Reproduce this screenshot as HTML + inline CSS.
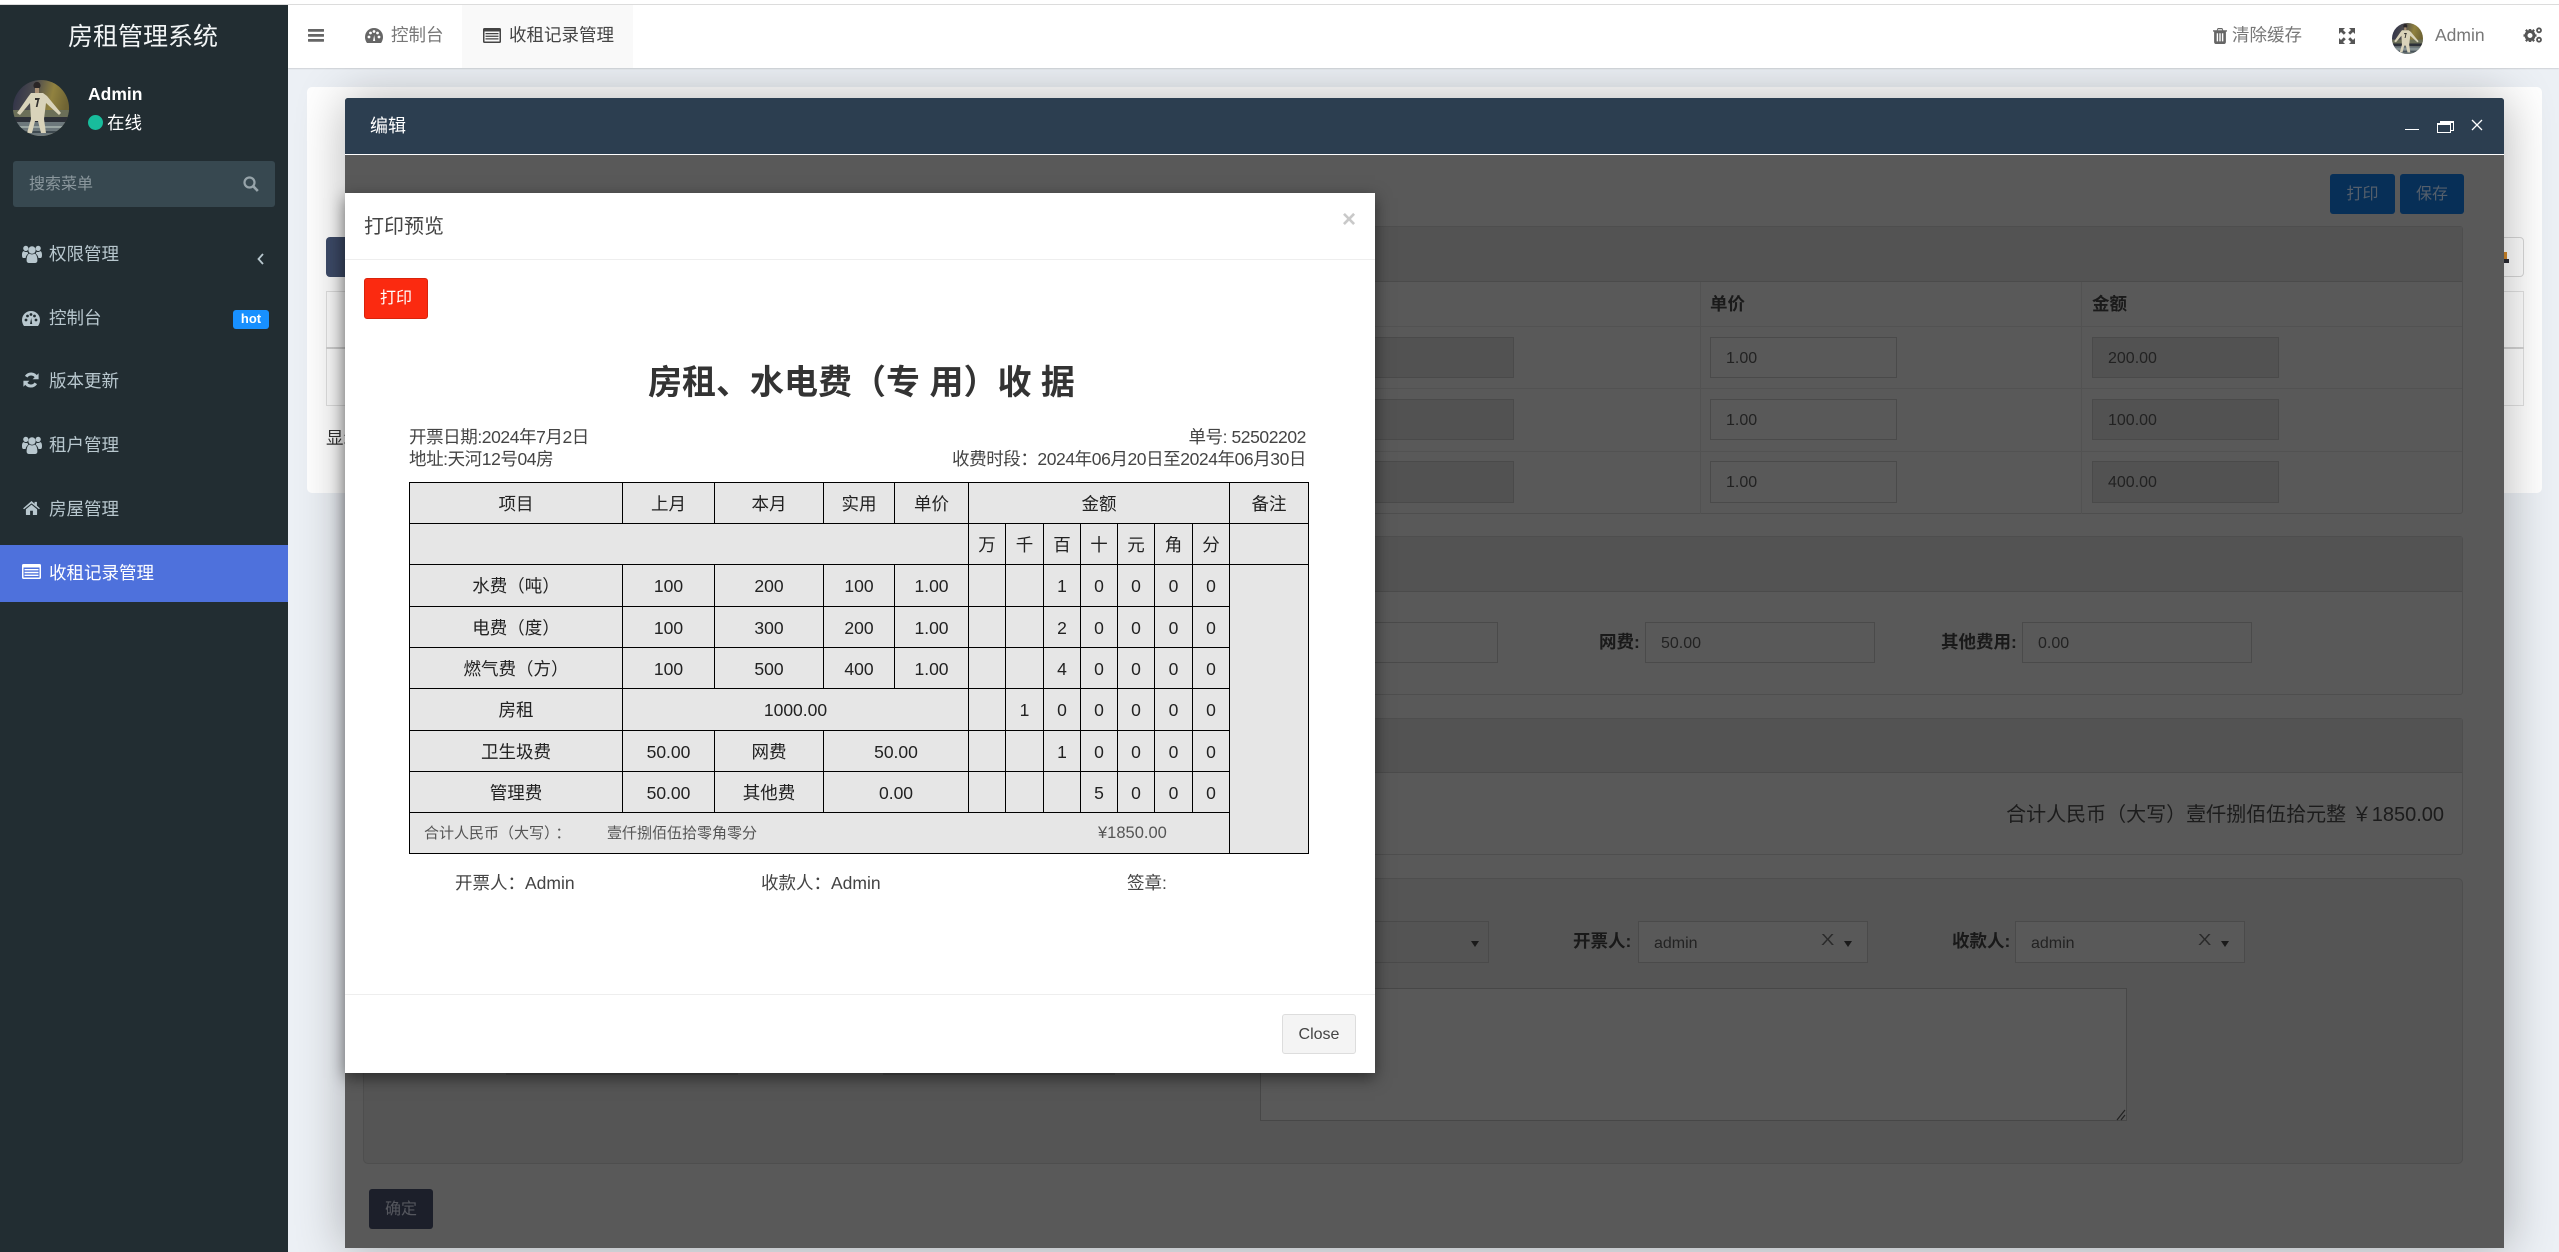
<!DOCTYPE html>
<html lang="zh-CN">
<head>
<meta charset="utf-8">
<title>房租管理系统</title>
<style>
*{box-sizing:border-box}
html,body{margin:0;padding:0;width:2559px;height:1252px;overflow:hidden;background:#ecf0f5;font-family:"Liberation Sans","Noto Sans CJK SC",sans-serif;font-size:17.5px;color:#333}
.a{position:absolute}
.t{position:absolute;white-space:nowrap}
svg{position:absolute;display:block;overflow:visible}
#top{left:0;top:0;width:2559px;height:5px;background:#fff;border-bottom:1px solid #dcdcdc}
#side{left:0;top:5px;width:288px;height:1247px;background:#222d32}
#hdr{left:288px;top:5px;width:2271px;height:63px;background:#fff;box-shadow:0 1px 1px rgba(0,0,0,.12)}
.m{color:#b8c7ce;font-size:17.5px;line-height:30px;left:49px}
.hd{color:#777;line-height:30px;top:20px}
#clip{left:288px;top:68px;width:2271px;height:1184px;overflow:hidden}
#panel{left:19px;top:19px;width:2235px;height:406px;background:#fff;border-radius:5px}
#layer{left:57px;top:30px;width:2159px;height:1150px;background:#595959;border-radius:3px 3px 0 0;box-shadow:1px 1px 50px rgba(0,0,0,.3)}
#lh{left:0;top:0;width:2159px;height:57px;background:#2c3e50;border-bottom:1px solid #fff;border-radius:3px 3px 0 0}
.pn{background:#595959;border:1px solid #4e4e4e;border-radius:3px;left:18px;width:2100px}
.ph{background:#535353;left:0;top:0;width:100%;border-bottom:1px solid #4b4b4b}
.ip{position:absolute;border:1px solid #4a4a4a;background:#595959;color:#222;font-size:16px;line-height:41px;padding-left:15px;white-space:nowrap}
.ro{background:#525252}
.lb{font-weight:bold;color:#191919;line-height:30px;white-space:nowrap;position:absolute}
#modal{left:345px;top:193px;width:1030px;height:880px;background:#fff;box-shadow:0 5px 15px rgba(0,0,0,.5)}
table{border-collapse:collapse;table-layout:fixed;position:absolute;left:64px;top:289px;width:899px;background:#e6e6e6;color:#222}
td{border:1px solid #000;padding:1px 0 0;text-align:center;font-size:17.5px;line-height:20px;position:relative}
.ds{letter-spacing:-.42px}
</style>
</head>
<body>
<svg width="0" height="0" style="position:absolute">
<defs>
<linearGradient id="avg" x1="0" y1="0" x2="1" y2=".25"><stop offset="0" stop-color="#2b2e48"/><stop offset=".4" stop-color="#4d4c4e"/><stop offset=".72" stop-color="#91823f"/><stop offset="1" stop-color="#6f6434"/></linearGradient>
<clipPath id="avc"><circle cx="28" cy="28" r="28"/></clipPath>
<symbol id="avatar" viewBox="0 0 56 56">
<g clip-path="url(#avc)">
<rect width="56" height="56" fill="url(#avg)"/>
<rect y="30" width="56" height="7" fill="#6b6f58"/>
<rect y="37" width="56" height="5" fill="#2c3038"/>
<rect y="42" width="56" height="14" fill="#6d787c"/>
<rect y="46" width="56" height="2" fill="#9aa6a3"/>
<rect y="51" width="56" height="2" fill="#3f4a50"/>
<circle cx="24" cy="5.500" r="3.600" fill="#2a2526"/>
<path d="M22 8h4v5h-4z" fill="#a98f74"/>
<path d="M18 13h12l4 3 14 17-2 2-13-12-2 16 2 14h-5l-3-12h-3l-3 12h-5l4-14-1-16-10 12-3-2 11-16z" fill="#d9d3ba"/>
<path d="M22 18h5l-1 2-1.500 7h-1.700l1.500-7H22z" fill="#33312f"/>
</g>
</symbol>
<symbol id="users" viewBox="0 0 20 18">
<circle cx="10" cy="5" r="3.7"/><circle cx="3.8" cy="3.4" r="2.6"/><circle cx="16.2" cy="3.4" r="2.6"/>
<path d="M4.600 15.500c0-4.500 1.600-6.800 3-6.900 1.500 1.100 3.300 1.100 4.800 0 1.400.1 3 2.400 3 6.900 0 1.600-1 2.500-2.500 2.500H7.100c-1.500 0-2.500-.9-2.500-2.500z"/>
<path d="M0 10c0-2.400.7-3.800 1.700-3.900 1.100.9 2.600 1.100 4 .6-.2.8.2 1.400.6 1.900-1.400 1-2.400 2.500-2.700 4.400H1.400C.5 13 0 12 0 10z"/>
<path d="M20 10c0-2.400-.7-3.800-1.700-3.900-1.100.9-2.600 1.100-4 .6.2.8-.2 1.400-.6 1.900 1.400 1 2.400 2.500 2.700 4.400h2.200c.9 0 1.400-1 1.400-3z"/>
</symbol>
<symbol id="refresh" viewBox="0 0 16 16">
<path d="M13.300 5.200A5.800 5.800 0 0 0 3.200 4.700" fill="none" stroke="currentColor" stroke-width="3"/>
<path d="M15.600 1.200v6h-6z"/>
<path d="M2.700 10.800a5.800 5.800 0 0 0 10.100.5" fill="none" stroke="currentColor" stroke-width="3"/>
<path d="M.4 14.800v-6h6z"/>
</symbol>
<symbol id="home" viewBox="0 0 18 15">
<path d="M9 0l3.300 2.900V1h2.500v4l3.200 2.900-.9 1L9 2.500 1 8.900l-1-1z"/>
<path d="M9 3.900l6 5v5.400c0 .4-.3.7-.7.7h-3.800v-4.500h-3V15H3.700c-.4 0-.7-.3-.7-.7V8.900z"/>
</symbol>
<symbol id="bars" viewBox="0 0 16 13"><rect width="16" height="2.800" rx=".5"/><rect y="5" width="16" height="2.800" rx=".5"/><rect y="10" width="16" height="2.800" rx=".5"/></symbol>
<symbol id="trash" viewBox="0 0 14 16">
<path d="M4.700 0h4.600l1 2.200H14v1.400h-1.100V14c0 1.100-.7 2-1.700 2H2.800c-1 0-1.700-.9-1.700-2V3.600H0V2.200h3.700zM5.200 1.300l-.4.9h4.400l-.4-.9zM3.700 5.200v8.200h1.400V5.200zm2.600 0v8.200h1.400V5.200zm2.600 0v8.200h1.400V5.200z" fill-rule="evenodd"/>
</symbol>
<symbol id="expand" viewBox="0 0 16 16">
<path d="M0 0h6L4 2l2.800 2.800-2 2L2 4 0 6zM16 0v6l-2-2-2.800 2.800-2-2L12 2l-2-2zM0 16v-6l2 2 2.800-2.800 2 2L4 14l2 2zM16 16h-6l2-2-2.800-2.800 2-2L14 12l2-2z"/>
</symbol>
<symbol id="cogs" viewBox="0 0 20 16">
<circle cx="7" cy="8.500" r="4" fill="none" stroke="currentColor" stroke-width="3"/>
<path d="M5.800 2h2.400l.3 2H5.500zM5.800 15h2.400l.3-2H5.500zM.5 7.300v2.400l2-.3V7.600zM13.500 7.300v2.400l-2-.3V7.600zM2 3.700L3.700 2 5 3.600 3.600 5zM12 3.700L10.300 2 9 3.600 10.400 5zM2 13.300L3.700 15 5 13.400 3.600 12zM12 13.300L10.300 15 9 13.400 10.400 12z"/>
<circle cx="16" cy="3.300" r="2" fill="none" stroke="currentColor" stroke-width="1.800"/>
<circle cx="16" cy="12.700" r="2" fill="none" stroke="currentColor" stroke-width="1.800"/>
</symbol>
</defs>
</svg>

<div id="top" class="a"></div>

<!-- sidebar -->
<div id="side" class="a">
  <div class="t" style="left:68px;top:16px;font-size:25px;line-height:32px;color:#f2f5f6">房租管理系统</div>
  <svg style="left:13px;top:75px" width="56" height="56"><use href="#avatar"/></svg>
  <div class="t" style="left:88px;top:78px;font-size:17.5px;line-height:22px;font-weight:bold;color:#fff">Admin</div>
  <div class="a" style="left:88px;top:110px;width:15px;height:15px;border-radius:50%;background:#18bc9c"></div>
  <div class="t" style="left:107px;top:107px;line-height:22px;color:#fff">在线</div>
  <div class="a" style="left:13px;top:156px;width:262px;height:46px;background:#374850;border-radius:3px"></div>
  <div class="t" style="left:29px;top:168px;font-size:16px;line-height:24px;color:#8b979d">搜索菜单</div>
  <svg style="left:243px;top:171px;color:#97a4aa" width="16" height="16" viewBox="0 0 16 16"><circle cx="6.500" cy="6.500" r="5" fill="none" stroke="currentColor" stroke-width="2.200"/><path d="M10.300 10.300l4.500 4.700" stroke="currentColor" stroke-width="2.600" fill="none"/></svg>

  <svg style="left:22px;top:240px;fill:#b8c7ce" width="20" height="18"><use href="#users"/></svg>
  <div class="t m" style="top:234px">权限管理</div>
  <svg style="left:257px;top:248px" width="7" height="12" viewBox="0 0 7 12"><path d="M6 1L1.500 6 6 11" fill="none" stroke="#b8c7ce" stroke-width="1.800"/></svg>

  <svg style="left:22px;top:306px" width="18" height="15" viewBox="0 0 18 15"><path d="M9 0a9 9 0 0 0-9 9c0 2.400.8 4.400 2 6h14c1.200-1.600 2-3.600 2-6a9 9 0 0 0-9-9z" fill="#b8c7ce"/><circle cx="4" cy="9" r="1.400" fill="#222d32"/><circle cx="5.500" cy="5" r="1.400" fill="#222d32"/><circle cx="9" cy="3.500" r="1.400" fill="#222d32"/><circle cx="14" cy="9" r="1.400" fill="#222d32"/><circle cx="12.500" cy="5" r="1.400" fill="#222d32"/><path d="M8 13l1.200-6 1 6z" fill="#222d32"/></svg>
  <div class="t m" style="top:298px">控制台</div>
  <div class="t" style="left:233px;top:305px;width:36px;height:19px;background:#1890ff;border-radius:3px;color:#fff;font-weight:bold;font-size:13px;line-height:18px;text-align:center">hot</div>

  <svg style="left:23px;top:367px;fill:#b8c7ce;color:#b8c7ce" width="16" height="16"><use href="#refresh"/></svg>
  <div class="t m" style="top:361px">版本更新</div>

  <svg style="left:22px;top:431px;fill:#b8c7ce" width="20" height="18"><use href="#users"/></svg>
  <div class="t m" style="top:425px">租户管理</div>

  <svg style="left:23px;top:496px;fill:#b8c7ce" width="17" height="14"><use href="#home"/></svg>
  <div class="t m" style="top:489px">房屋管理</div>

  <div class="a" style="left:0;top:540px;width:288px;height:57px;background:#4e71dc"></div>
  <svg style="left:22px;top:559px" width="19" height="15" viewBox="0 0 19 15"><rect width="19" height="15" rx="1.500" fill="#fff"/><path d="M1.500 3.500h16V13.500h-16z" fill="#4e71dc"/><path d="M2.500 5h14v1.400h-14zM2.500 7.800h14v1.400h-14zM2.500 10.600h14v1.400h-14z" fill="#fff"/></svg>
  <div class="t m" style="top:553px;color:#fff">收租记录管理</div>
</div>

<!-- header -->
<div id="hdr" class="a">
  <svg style="left:20px;top:24px;fill:#666" width="16" height="13"><use href="#bars"/></svg>
  <svg style="left:77px;top:23px" width="18" height="15" viewBox="0 0 18 15"><path d="M9 0a9 9 0 0 0-9 9c0 2.400.8 4.400 2 6h14c1.200-1.600 2-3.600 2-6a9 9 0 0 0-9-9z" fill="#666"/><circle cx="4" cy="9" r="1.400" fill="#fff"/><circle cx="5.500" cy="5" r="1.400" fill="#fff"/><circle cx="9" cy="3.500" r="1.400" fill="#fff"/><circle cx="14" cy="9" r="1.400" fill="#fff"/><circle cx="12.500" cy="5" r="1.400" fill="#fff"/><path d="M8 13l1.200-6 1 6z" fill="#fff"/></svg>
  <div class="t hd" style="left:103px;top:15px">控制台</div>
  <div class="a" style="left:174px;top:0;width:171px;height:63px;background:#f9f9f9"></div>
  <svg style="left:195px;top:23px" width="18" height="15" viewBox="0 0 18 15"><rect width="18" height="15" rx="1.500" fill="#444"/><path d="M1.500 3.500h15v10h-15z" fill="#f9f9f9"/><path d="M2.500 5h13v1.300h-13zM2.500 7.600h13v1.300h-13zM2.500 10.200h13v1.300h-13z" fill="#444"/></svg>
  <div class="t hd" style="left:221px;top:15px;color:#444">收租记录管理</div>

  <svg style="left:1925px;top:23px;fill:#666" width="14" height="16"><use href="#trash"/></svg>
  <div class="t hd" style="left:1944px;top:15px">清除缓存</div>
  <svg style="left:2051px;top:23px;fill:#555" width="16" height="16"><use href="#expand"/></svg>
  <svg style="left:2104px;top:18px" width="31" height="31"><use href="#avatar"/></svg>
  <div class="t hd" style="left:2147px;top:15px">Admin</div>
  <svg style="left:2235px;top:22px;fill:#555;color:#555" width="20" height="16"><use href="#cogs"/></svg>
</div>

<!-- content area -->
<div id="clip" class="a">
  <div id="panel" class="a">
    <div class="a" style="left:19px;top:150px;width:60px;height:40px;background:#3f4d6b;border-radius:4px"></div>
    <div class="a" style="left:19px;top:204px;width:2198px;height:115px;border:1px solid #e2e2e2;background:#fff"></div>
    <div class="a" style="left:19px;top:260px;width:2198px;height:2px;background:#d4d4d4"></div>
    <div class="t" style="left:19px;top:337px;line-height:28px;color:#333">显示</div>
    <div class="a" style="left:2162px;top:150px;width:55px;height:40px;background:#fff;border:1px solid #d8d8d8;border-radius:4px"></div>
    <div class="a" style="left:2197px;top:165px;width:3px;height:7px;background:#d58a2a"></div>
    <div class="a" style="left:2197px;top:172px;width:5px;height:4px;background:#2b2b33"></div>
  </div>

  <div id="layer" class="a">
    <div id="lh" class="a">
      <div class="t" style="left:25px;top:15px;font-size:18px;line-height:26px;color:#fff">编辑</div>
      <div class="a" style="left:2060px;top:31px;width:14px;height:1px;background:#fff"></div>
      <div class="a" style="left:2095px;top:23px;width:14px;height:10px;border:1px solid #fff;border-top-width:2px"></div>
      <div class="a" style="left:2092px;top:25px;width:14px;height:10px;border:1px solid #fff;border-top-width:2px;background:#2c3e50"></div>
      <svg style="left:2127px;top:22px" width="10" height="10" viewBox="0 0 10 10"><path d="M0 0l10 10M10 0L0 10" stroke="#fff" stroke-width="1.300"/></svg>
    </div>

    <div class="t" style="left:1985px;top:76px;width:65px;height:40px;background:#072f57;border-radius:3px;color:#555f6b;text-align:center;line-height:42px;font-size:16px">打印</div>
    <div class="t" style="left:2055px;top:76px;width:64px;height:40px;background:#072f57;border-radius:3px;color:#555f6b;text-align:center;line-height:42px;font-size:16px">保存</div>

    <!-- panel 1 -->
    <div class="a pn" style="top:128px;height:288px">
      <div class="a ph" style="height:55px"></div>
      <div class="a" style="left:0;top:99px;width:100%;height:1px;background:#525252"></div>
      <div class="a" style="left:0;top:161px;width:100%;height:1px;background:#525252"></div>
      <div class="a" style="left:0;top:224px;width:100%;height:1px;background:#525252"></div>
      <div class="a" style="left:1336px;top:55px;width:1px;height:232px;background:#525252"></div>
      <div class="a" style="left:1717px;top:55px;width:1px;height:232px;background:#525252"></div>
      <div class="lb" style="left:1346px;top:62px;color:#1a1a1a">单价</div>
      <div class="lb" style="left:1728px;top:62px;color:#1a1a1a">金额</div>
      <div class="ip ro" style="left:900px;top:110px;width:250px;height:41px"></div>
      <div class="ip ro" style="left:900px;top:172px;width:250px;height:41px"></div>
      <div class="ip ro" style="left:900px;top:234px;width:250px;height:42px"></div>
      <div class="ip" style="left:1346px;top:110px;width:187px;height:41px">1.00</div>
      <div class="ip" style="left:1346px;top:172px;width:187px;height:41px">1.00</div>
      <div class="ip" style="left:1346px;top:234px;width:187px;height:42px">1.00</div>
      <div class="ip ro" style="left:1728px;top:110px;width:187px;height:41px">200.00</div>
      <div class="ip ro" style="left:1728px;top:172px;width:187px;height:41px">100.00</div>
      <div class="ip ro" style="left:1728px;top:234px;width:187px;height:42px">400.00</div>
    </div>

    <!-- panel 2 -->
    <div class="a pn" style="top:438px;height:159px">
      <div class="a ph" style="height:55px"></div>
      <div class="ip" style="left:900px;top:85px;width:234px;height:41px"></div>
      <div class="lb" style="left:1235px;top:90px">网费:</div>
      <div class="ip" style="left:1281px;top:85px;width:230px;height:41px">50.00</div>
      <div class="lb" style="left:1577px;top:90px">其他费用:</div>
      <div class="ip" style="left:1658px;top:85px;width:230px;height:41px">0.00</div>
    </div>

    <!-- panel 3 -->
    <div class="a pn" style="top:620px;height:137px">
      <div class="a ph" style="height:54px"></div>
      <div class="t" style="right:18px;top:81px;font-size:20px;line-height:30px;color:#1c1c1c">合计人民币（大写）壹仟捌佰伍拾元整 ￥1850.00</div>
    </div>

    <!-- panel 4 -->
    <div class="a pn" style="top:780px;height:286px;background:#555;border-radius:5px">
      <div class="ip" style="left:900px;top:42px;width:225px;height:42px;background:#545454"></div>
      <div class="a" style="left:1107px;top:62px;border:4px solid transparent;border-top:6px solid #1a1a1a;border-bottom:0"></div>

      <div class="lb" style="left:1209px;top:47px">开票人:</div>
      <div class="ip" style="left:1274px;top:42px;width:230px;height:42px;color:#222;line-height:43px">admin</div>
      <div class="t" style="left:1457px;top:51px;line-height:22px;font-size:16px;color:#2a2a2a;transform:scaleX(1.25);transform-origin:left">X</div>
      <div class="a" style="left:1480px;top:62px;border:4px solid transparent;border-top:6px solid #1a1a1a;border-bottom:0"></div>

      <div class="lb" style="left:1588px;top:47px">收款人:</div>
      <div class="ip" style="left:1651px;top:42px;width:230px;height:42px;color:#222;line-height:43px">admin</div>
      <div class="t" style="left:1834px;top:51px;line-height:22px;font-size:16px;color:#2a2a2a;transform:scaleX(1.25);transform-origin:left">X</div>
      <div class="a" style="left:1857px;top:62px;border:4px solid transparent;border-top:6px solid #1a1a1a;border-bottom:0"></div>

      <div class="a" style="left:896px;top:109px;width:867px;height:133px;background:#595959;border:1px solid #474747"></div>
      <svg style="left:1752px;top:231px" width="10" height="10" viewBox="0 0 10 10"><path d="M9 0L1 10M9 5L5 10" stroke="#222" stroke-width="1.200"/></svg>
    </div>

    <div class="a" style="left:161px;top:975px;width:232px;height:2px;background:#4a4a4a"></div>
    <div class="a" style="left:538px;top:975px;width:232px;height:2px;background:#4a4a4a"></div>

    <div class="t" style="left:24px;top:1091px;width:64px;height:40px;background:#1c1f2a;border-radius:3px;color:#55575e;text-align:center;line-height:42px;font-size:16px">确定</div>
  </div>
</div>

<!-- print modal -->
<div id="modal" class="a">
  <div class="t" style="left:19px;top:20px;font-size:20px;line-height:28px;color:#444">打印预览</div>
  <div class="t" style="left:997px;top:14px;font-size:24px;line-height:26px;font-weight:bold;color:#c9c9c9">×</div>
  <div class="a" style="left:0;top:66px;width:1030px;height:1px;background:#eee"></div>
  <div class="t" style="left:19px;top:85px;width:64px;height:41px;background:#fb2a10;border:1px solid #d9230b;border-radius:3px;color:#fff;text-align:center;line-height:40px;font-size:16px">打印</div>
  <div class="t" style="left:303px;top:166px;font-size:34px;line-height:48px;font-weight:bold;color:#333">房租、水电费（专 用）收 据</div>

  <div class="t ds" style="left:64px;top:232px;line-height:24px;color:#444">开票日期:2024年7月2日</div>
  <div class="t ds" style="left:64px;top:254px;line-height:24px;color:#444">地址:天河12号04房</div>
  <div class="t ds" style="right:69px;top:232px;line-height:24px;color:#444">单号: 52502202</div>
  <div class="t ds" style="right:69px;top:254px;line-height:24px;color:#444">收费时段：2024年06月20日至2024年06月30日</div>

  <table>
    <colgroup><col style="width:213px"><col style="width:92px"><col style="width:109px"><col style="width:71px"><col style="width:74px"><col style="width:37px"><col style="width:38px"><col style="width:37px"><col style="width:37px"><col style="width:37px"><col style="width:38px"><col style="width:37px"><col style="width:79px"></colgroup>
    <tr style="height:41px"><td>项目</td><td>上月</td><td>本月</td><td>实用</td><td>单价</td><td colspan="7">金额</td><td>备注</td></tr>
    <tr style="height:41px"><td colspan="5"></td><td>万</td><td>千</td><td>百</td><td>十</td><td>元</td><td>角</td><td>分</td><td></td></tr>
    <tr style="height:42px"><td>水费（吨）</td><td>100</td><td>200</td><td>100</td><td>1.00</td><td></td><td></td><td>1</td><td>0</td><td>0</td><td>0</td><td>0</td><td rowspan="7"></td></tr>
    <tr style="height:41px"><td>电费（度）</td><td>100</td><td>300</td><td>200</td><td>1.00</td><td></td><td></td><td>2</td><td>0</td><td>0</td><td>0</td><td>0</td></tr>
    <tr style="height:41px"><td>燃气费（方）</td><td>100</td><td>500</td><td>400</td><td>1.00</td><td></td><td></td><td>4</td><td>0</td><td>0</td><td>0</td><td>0</td></tr>
    <tr style="height:42px"><td>房租</td><td colspan="4">1000.00</td><td></td><td>1</td><td>0</td><td>0</td><td>0</td><td>0</td><td>0</td></tr>
    <tr style="height:41px"><td>卫生圾费</td><td>50.00</td><td>网费</td><td colspan="2">50.00</td><td></td><td></td><td>1</td><td>0</td><td>0</td><td>0</td><td>0</td></tr>
    <tr style="height:41px"><td>管理费</td><td>50.00</td><td>其他费</td><td colspan="2">0.00</td><td></td><td></td><td></td><td>5</td><td>0</td><td>0</td><td>0</td></tr>
    <tr style="height:41px"><td colspan="12" style="color:#555;font-size:15px">
      <span class="t" style="left:14px;top:11px">合计人民币（大写）<span style="position:relative;left:4px">：</span></span>
      <span class="t" style="left:197px;top:11px">壹仟捌佰伍拾零角零分</span>
      <span class="t" style="left:688px;top:10px;font-size:16.5px">¥1850.00</span>
    </td></tr>
  </table>

  <div class="t" style="left:110px;top:677px;line-height:26px;color:#444">开票人：Admin</div>
  <div class="t" style="left:416px;top:677px;line-height:26px;color:#444">收款人：Admin</div>
  <div class="t" style="left:782px;top:677px;line-height:26px;color:#444">签章:</div>

  <div class="a" style="left:0;top:801px;width:1030px;height:1px;background:#eee"></div>
  <div class="t" style="left:937px;top:821px;width:74px;height:40px;background:#f4f4f4;border:1px solid #ddd;border-radius:3px;color:#444;text-align:center;line-height:40px;font-size:16px">Close</div>
</div>
</body>
</html>
